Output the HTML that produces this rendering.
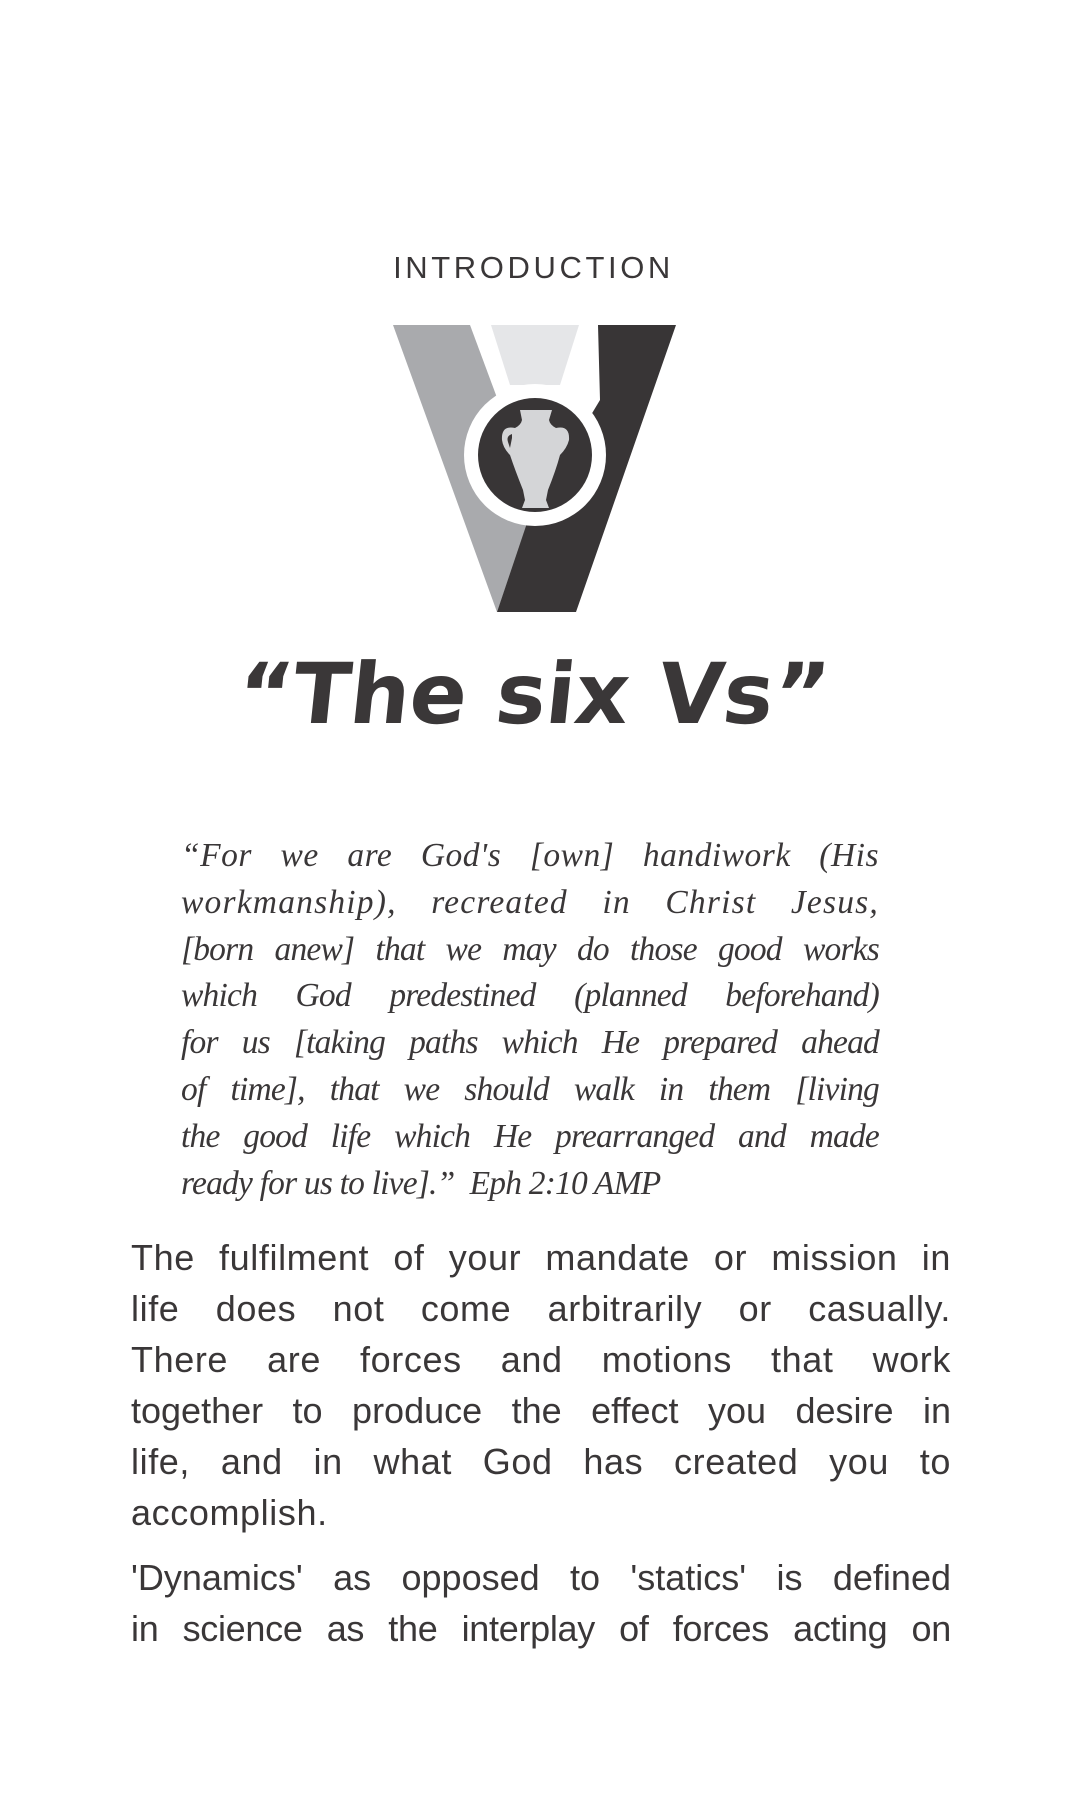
<!DOCTYPE html>
<html><head><meta charset="utf-8"><style>
html,body{margin:0;padding:0;background:#fff;}
body{width:1067px;height:1800px;position:relative;overflow:hidden;color:#3a3738;}
.intro{position:absolute;left:0;width:1067px;top:250px;text-align:center;font-family:"Liberation Sans",sans-serif;font-size:31px;letter-spacing:3.6px;color:#3a3738;}
.title{position:absolute;left:0;width:1067px;top:645px;text-align:center;font-family:"DejaVu Sans",sans-serif;font-weight:bold;font-size:84px;color:#3a3738;transform:skewX(-6deg);}
.quote{position:absolute;left:181px;width:698px;top:833px;font-family:"Liberation Serif",serif;font-style:italic;font-size:33.5px;line-height:46.8px;color:#3a3738;}
.body{position:absolute;left:131px;width:820px;font-family:"Liberation Sans",sans-serif;font-size:36px;letter-spacing:0.6px;line-height:51px;color:#3a3738;}
.l{text-align:justify;text-align-last:justify;white-space:nowrap;}
.n{text-align:left;white-space:nowrap;}
</style></head><body>
<div class="intro">INTRODUCTION</div>
<svg style="position:absolute;left:0;top:0" width="1067" height="700">
<polygon points="393,325 470,325 535,500 497,612" fill="#a9aaad"/>
<polygon points="491,325 579,325 560,385 510,385" fill="#e5e6e8"/>
<polygon points="598,325 676,325 576,612 497,612 528,520 600,400" fill="#383536"/>
<circle cx="535" cy="455" r="71" fill="#fff"/>
<circle cx="535" cy="455" r="57" fill="#383536"/>
<path d="M520,410 L552,410 L549,420 Q550,425 556,428 Q570,425 569,440 Q567,448 560,455 Q556,470 548,490 L546,500 L549,508 L522,508 L525,500 L523,490 Q515,470 510,455 Q503,448 502,440 Q501,425 515,428 Q521,425 522,420 Z M512,434 Q506,436 508,442 L510,448 L512,438 Z M560,434 Q566,436 564,442 L562,448 L560,438 Z" fill="#d4d5d7"/>
</svg>
<div class="title">“The six Vs”</div>
<div class="quote">
<div class="l" style="letter-spacing:0.5px">“For we are God's [own] handiwork (His</div>
<div class="l" style="letter-spacing:1.2px">workmanship), recreated in Christ Jesus,</div>
<div class="l" style="letter-spacing:-0.8px">[born anew] that we may do those good works</div>
<div class="l" style="letter-spacing:-0.8px">which God predestined (planned beforehand)</div>
<div class="l" style="letter-spacing:-0.8px">for us [taking paths which He prepared ahead</div>
<div class="l" style="letter-spacing:-0.8px">of time], that we should walk in them [living</div>
<div class="l" style="letter-spacing:-0.8px">the good life which He prearranged and made</div>
<div class="n" style="letter-spacing:-0.8px">ready for us to live].”&nbsp; Eph 2:10 AMP</div>
</div>
<div class="body" style="top:1232px">
<div class="l">The fulfilment of your mandate or mission in</div>
<div class="l">life does not come arbitrarily or casually.</div>
<div class="l">There are forces and motions that work</div>
<div class="l" style="letter-spacing:0">together to produce the effect you desire in</div>
<div class="l">life, and in what God has created you to</div>
<div class="n">accomplish.</div>
</div>
<div class="body" style="top:1552px">
<div class="l" style="letter-spacing:0">'Dynamics' as opposed to 'statics' is defined</div>
<div class="l" style="letter-spacing:-0.3px;word-spacing:-4px">in science as the interplay of forces acting on</div>
</div>
</body></html>
